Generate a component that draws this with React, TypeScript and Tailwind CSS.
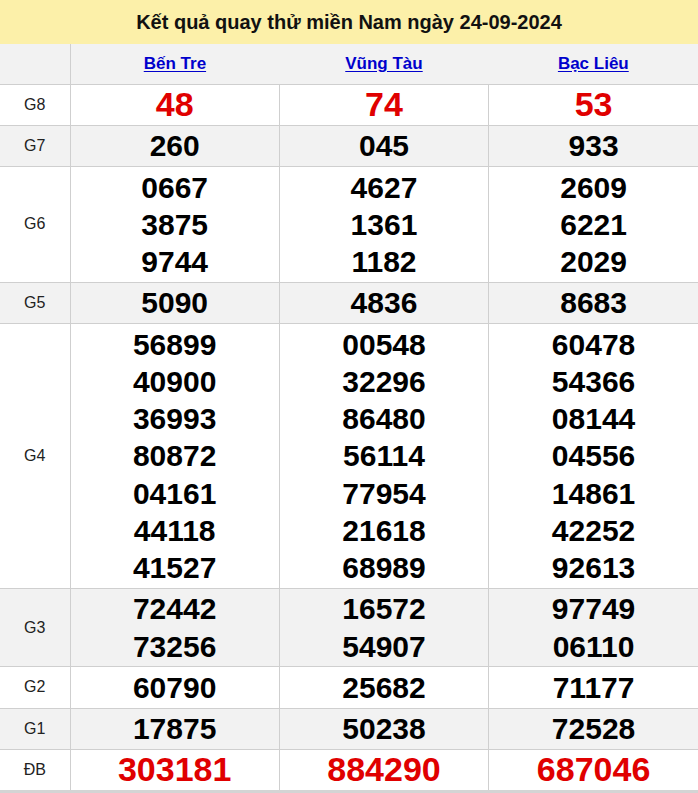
const PROVINCES = ["Bến Tre", "Vũng Tàu", "Bạc Liêu"];

const ROWS: { label: string; red?: boolean; values: string[][] }[] = [
  { label: "G8", red: true, values: [["48"], ["74"], ["53"]] },
  { label: "G7", values: [["260"], ["045"], ["933"]] },
  { label: "G6", values: [["0667", "3875", "9744"], ["4627", "1361", "1182"], ["2609", "6221", "2029"]] },
  { label: "G5", values: [["5090"], ["4836"], ["8683"]] },
  {
    label: "G4",
    values: [
      ["56899", "40900", "36993", "80872", "04161", "44118", "41527"],
      ["00548", "32296", "86480", "56114", "77954", "21618", "68989"],
      ["60478", "54366", "08144", "04556", "14861", "42252", "92613"],
    ],
  },
  { label: "G3", values: [["72442", "73256"], ["16572", "54907"], ["97749", "06110"]] },
  { label: "G2", values: [["60790"], ["25682"], ["71177"]] },
  { label: "G1", values: [["17875"], ["50238"], ["72528"]] },
  { label: "ĐB", red: true, values: [["303181"], ["884290"], ["687046"]] },
];

export default function App() {
  return (
    <div className="w-[698px] bg-white font-['Liberation_Sans',Arial,sans-serif]">
      <div className="flex h-[44px] items-center justify-center bg-[#fcf0a9] text-[20px] font-bold text-[#111]">
        Kết quả quay thử miền Nam ngày 24-09-2024
      </div>
      <table className="w-full table-fixed border-collapse border-b-[4px] border-b-[#d4d4d4]">
        <colgroup>
          <col className="w-[70px]" />
          <col />
          <col />
          <col />
        </colgroup>
        <thead>
          <tr className="h-[40px] bg-[#f2f2f2]">
            <th className="border-r border-b border-[#cfcfcf]" />
            {PROVINCES.map((p) => (
              <th key={p} className="border-b border-[#cfcfcf] text-center text-[17px] font-bold">
                <a href="#" className="text-[#0000cc] underline underline-offset-2">
                  {p}
                </a>
              </th>
            ))}
          </tr>
        </thead>
        <tbody>
          {ROWS.map((r, i) => (
            <tr key={r.label} className={i % 2 === 1 ? "bg-[#f2f2f2]" : "bg-white"}>
              <td className="border-r border-b border-[#cfcfcf] text-center text-[16px] text-[#222]">{r.label}</td>
              {r.values.map((col, j) => (
                <td
                  key={j}
                  className={
                    "border-b border-[#cfcfcf] py-[1.5px] text-center font-bold leading-[37.25px] " +
                    (j < 2 ? "border-r " : "") +
                    (r.red ? "text-[34px] text-[#e00000]" : "text-[30px] text-black")
                  }
                >
                  {col.map((v) => (
                    <div key={v}>{v}</div>
                  ))}
                </td>
              ))}
            </tr>
          ))}
        </tbody>
      </table>
    </div>
  );
}
